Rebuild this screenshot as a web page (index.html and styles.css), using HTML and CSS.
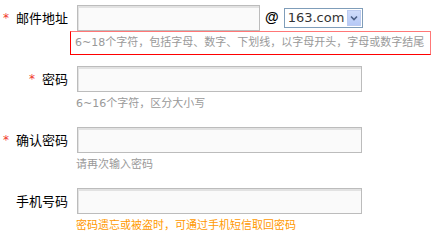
FILE: index.html
```html
<!DOCTYPE html>
<html lang="zh-CN">
<head>
<meta charset="utf-8">
<title>注册</title>
<link rel="stylesheet" href="styles.css">
</head>
<body>
<form class="reg">
  <div class="field">
    <div class="row">
      <label class="label"><span class="req">*</span>邮件地址</label>
      <input class="text short" type="text">
      <span class="at">@</span>
      <div class="select">
        <span class="select-val">163.com</span>
        <span class="select-btn"><svg width="8" height="6" viewBox="0 0 8 6"><path d="M1 1.5 L4 4.5 L7 1.5" fill="none" stroke="#4a5f86" stroke-width="1.6"/></svg></span>
      </div>
    </div>
    <div class="hint hint-error">6~18个字符，包括字母、数字、下划线，以字母开头，字母或数字结尾</div>
  </div>
  <div class="field">
    <div class="row">
      <label class="label"><span class="req">*</span>密码</label>
      <input class="text" type="password">
    </div>
    <div class="hint">6~16个字符，区分大小写</div>
  </div>
  <div class="field">
    <div class="row">
      <label class="label"><span class="req">*</span>确认密码</label>
      <input class="text" type="password">
    </div>
    <div class="hint">请再次输入密码</div>
  </div>
  <div class="field">
    <div class="row">
      <label class="label">手机号码</label>
      <input class="text" type="text">
    </div>
    <div class="hint hint-warn">密码遗忘或被盗时，可通过手机短信取回密码</div>
  </div>
</form>
</body>
</html>
```
FILE: styles.css
```css
body {
  margin: 0;
  background: #fff;
  font-family: "Noto Sans CJK SC", sans-serif;
}
.reg {
  padding-top: 5px;
}
.field {
  margin-bottom: 11px;
}
.row {
  display: flex;
  align-items: center;
  height: 26px;
}
.label {
  width: 68px;
  display: flex;
  justify-content: flex-end;
  align-items: center;
  font-size: 13px;
  color: #000;
  line-height: 16px;
}
.req {
  color: #f0382c;
  font-family: "DejaVu Sans", sans-serif;
  font-size: 12px;
  margin-right: 7px;
}
.text {
  margin: 0 0 0 9px;
  padding: 0;
  width: 285px;
  height: 26px;
  box-sizing: border-box;
  border: 1px solid #bcbcbc;
  background: #fafafa;
  box-shadow: inset 1px 2px 0 #e2e2e2;
  outline: none;
}
.text.short {
  width: 183px;
}
.at {
  margin-left: 5px;
  margin-bottom: 3px;
  font-family: "Liberation Sans", sans-serif;
  font-weight: bold;
  font-size: 14px;
  color: #000;
  line-height: 14px;
}
.select {
  margin-left: 5px;
  width: 79px;
  height: 20px;
  box-sizing: border-box;
  border: 1px solid #7f9db9;
  background: #fff;
  display: flex;
  align-items: center;
  justify-content: space-between;
  padding: 0 1px 0 3px;
}
.select-val {
  font-family: "DejaVu Sans", sans-serif;
  font-size: 13px;
  color: #333;
  line-height: 16px;
}
.select-btn {
  width: 14px;
  height: 16px;
  box-sizing: border-box;
  border: 1px solid #bccbf0;
  background: linear-gradient(#cfdcfb, #b6c9f6);
  display: flex;
  align-items: center;
  justify-content: center;
}
.hint {
  margin-left: 70px;
  height: 24px;
  line-height: 22px;
  border: 1px solid transparent;
  padding-left: 5px;
  box-sizing: border-box;
  font-family: "DejaVu Sans", "Noto Sans CJK SC", sans-serif;
  font-size: 11px;
  color: #999;
  white-space: nowrap;
}
.hint-error {
  width: 361px;
  padding-left: 4px;
  border-color: #f77 #f77 #f00 #f00;
}
.hint-warn {
  color: #f90;
}
```
